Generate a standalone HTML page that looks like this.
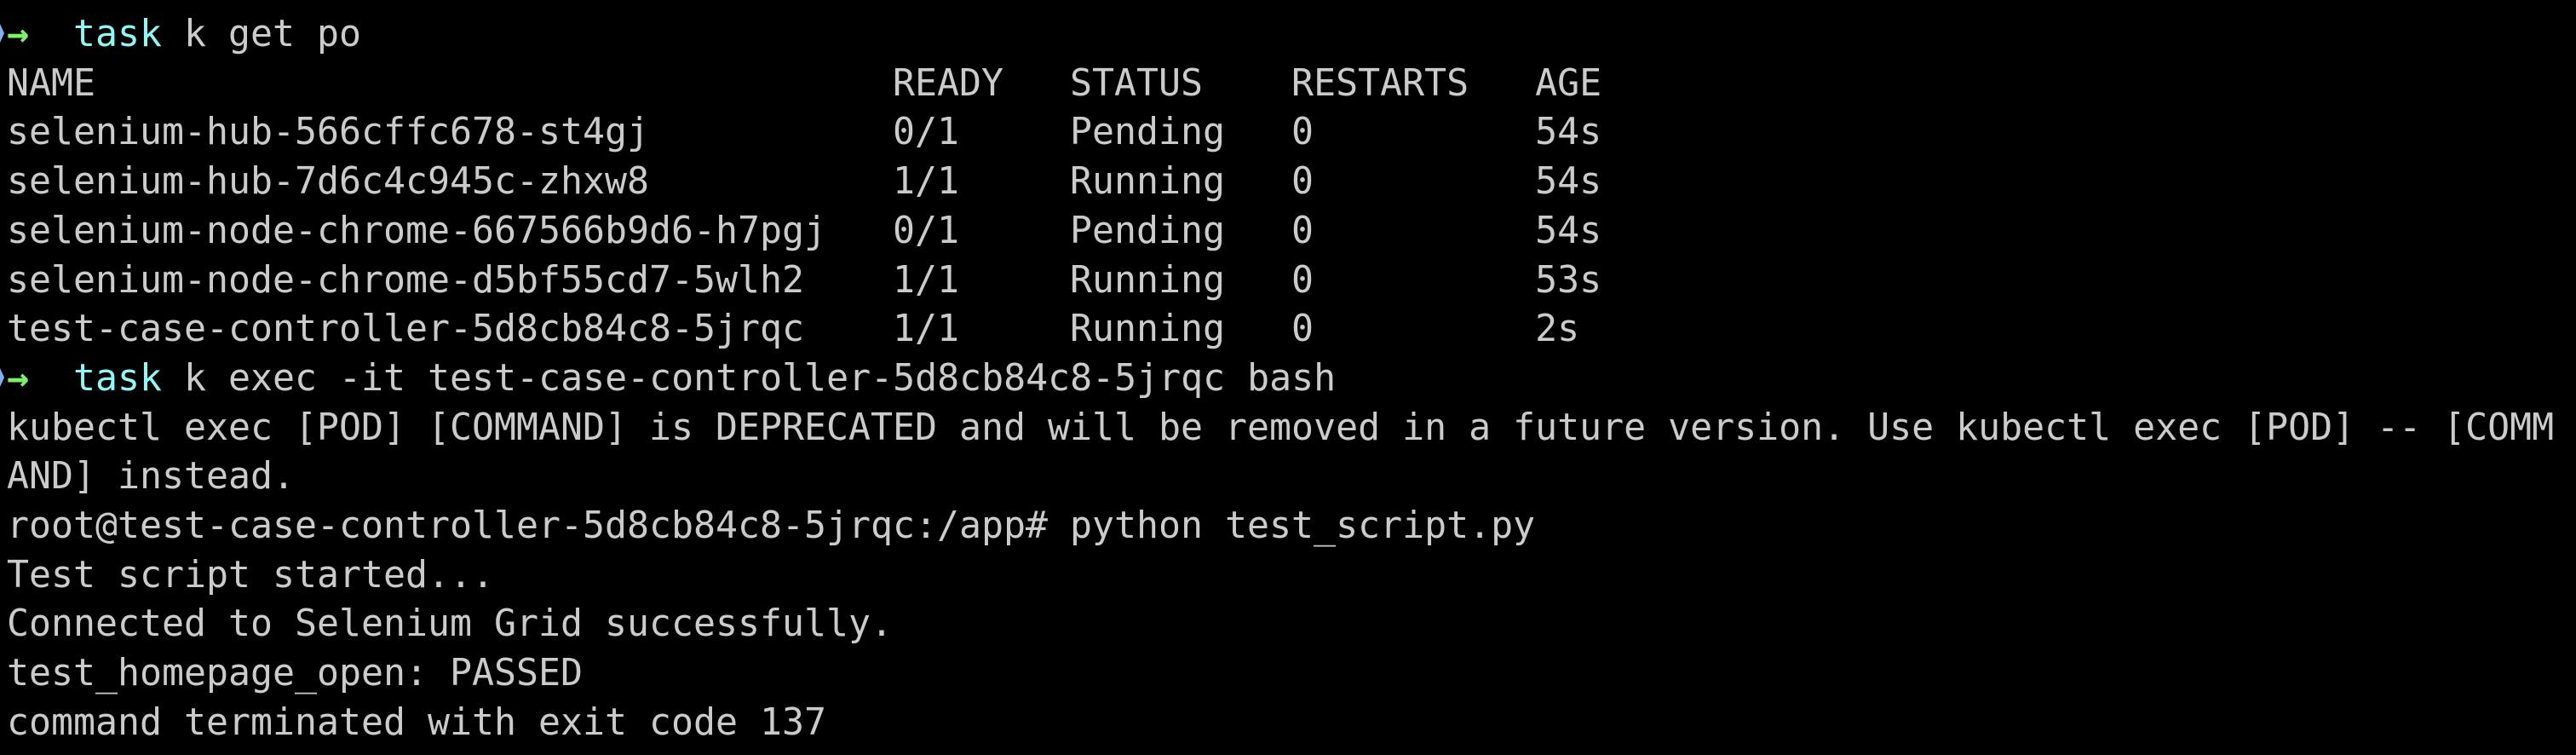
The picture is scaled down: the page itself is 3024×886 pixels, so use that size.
<!DOCTYPE html>
<html><head><meta charset="utf-8"><style>
html,body{margin:0;padding:0;background:#000;width:3024px;height:886px;overflow:hidden}
pre{margin:0;position:absolute;left:8px;top:12px;font-family:"DejaVu Sans Mono","Liberation Mono",monospace;font-size:43.2px;line-height:57.7px;color:#cbcbcb;white-space:pre}
.c{color:#8ff7f5}.g{color:#7ff06a;font-weight:bold}
.tri{position:absolute;left:0;top:28px;width:0;height:0;border-top:11px solid transparent;border-bottom:11px solid transparent;border-left:5px solid #7fb2f0}
.tri2{top:432px}
</style></head><body>
<div class="tri"></div><div class="tri tri2"></div>
<pre><span class="g">→</span>  <span class="c">task</span> k get po
NAME                                    READY   STATUS    RESTARTS   AGE
selenium-hub-566cffc678-st4gj           0/1     Pending   0          54s
selenium-hub-7d6c4c945c-zhxw8           1/1     Running   0          54s
selenium-node-chrome-667566b9d6-h7pgj   0/1     Pending   0          54s
selenium-node-chrome-d5bf55cd7-5wlh2    1/1     Running   0          53s
test-case-controller-5d8cb84c8-5jrqc    1/1     Running   0          2s
<span class="g">→</span>  <span class="c">task</span> k exec -it test-case-controller-5d8cb84c8-5jrqc bash
kubectl exec [POD] [COMMAND] is DEPRECATED and will be removed in a future version. Use kubectl exec [POD] -- [COMM
AND] instead.
root@test-case-controller-5d8cb84c8-5jrqc:/app# python test_script.py
Test script started...
Connected to Selenium Grid successfully.
test_homepage_open: PASSED
command terminated with exit code 137</pre>
</body></html>
